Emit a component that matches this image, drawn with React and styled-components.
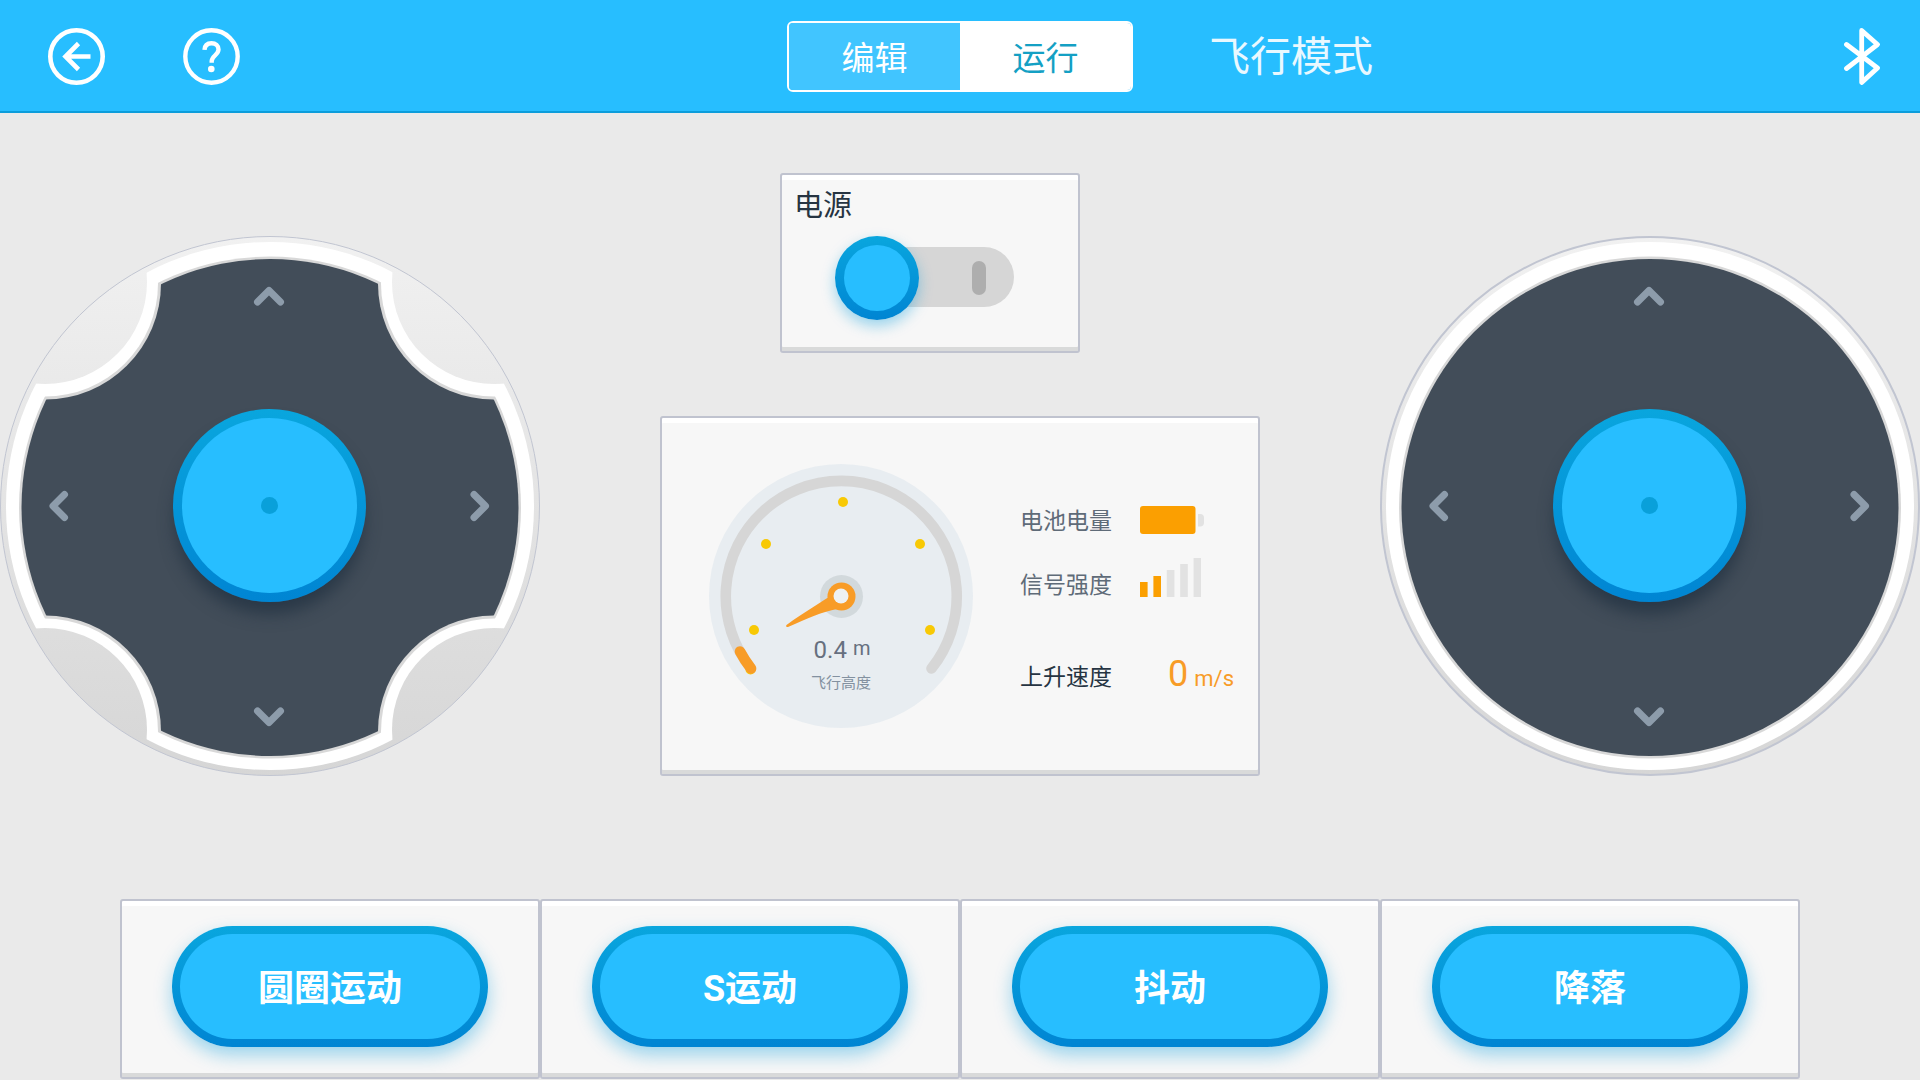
import { useState } from 'react'
import styled, { createGlobalStyle } from 'styled-components'

const colours = {
    sky: '#27beff',
    skyDark: '#0c9ddb',
    page: '#eaeaea',
    card: '#f7f7f7',
    line: '#c0c3cf',
    slate: '#424d59',
    chevron: '#8d9cab',
    ink: '#263442',
    muted: '#5f6b78',
    orange: '#f89c27',
    amber: '#fb9f01',
    off: '#e2e2e2',
}

const ring = 'linear-gradient(#09a6de, #0085d3)'
const glossy = `linear-gradient(${colours.sky}, ${colours.sky}) padding-box, ${ring} border-box`

const GlobalStyle = createGlobalStyle`
    * {
        box-sizing: border-box;
    }
    body {
        margin: 0;
        background: ${colours.page};
        color: ${colours.ink};
        font-family: Roboto, "Noto Sans CJK SC", sans-serif;
    }
    button {
        font-family: inherit;
        cursor: pointer;
    }
`

const Header = styled.header`
    display: grid;
    grid-template-columns: 1fr auto 1fr;
    align-items: center;
    height: 113px;
    padding: 2px 40px 0;
    background: ${colours.sky};
    border-bottom: 2px solid ${colours.skyDark};
`

const Actions = styled.div`
    display: flex;
    gap: 78px;
    padding-left: 8px;
`

const IconButton = styled.button`
    display: flex;
    padding: 0;
    border: 0;
    background: none;
    color: #fff;
`

const Segments = styled.div`
    display: flex;
    height: 71px;
    border: 2px solid #fff;
    border-radius: 6px;
    overflow: hidden;
`

const Segment = styled.button`
    width: 171px;
    padding: 4px 0 0;
    border: 0;
    font-size: 33px;
    line-height: 48px;
    background: ${props => props.$active ? '#fff' : '#41c5ff'};
    color: ${props => props.$active ? '#14a0c4' : '#fff'};
`

const TitleBar = styled.div`
    display: flex;
    align-items: center;
    justify-content: space-between;
    padding-left: 76px;
`

const Title = styled.h1`
    margin: 0;
    font-size: 41px;
    font-weight: 400;
    line-height: 60px;
    color: #e9f8ff;
`

const Stage = styled.main`
    display: grid;
    grid-template-columns: auto auto auto;
    justify-content: space-between;
    align-items: end;
    padding-top: 60px;
`

const Column = styled.div`
    display: flex;
    flex-direction: column;
    gap: 63px;
    width: 600px;
`

const Card = styled.section`
    height: 180px;
    border: 2px solid ${colours.line};
    border-radius: 3px;
    background: ${colours.card};
    box-shadow: inset 0 5px #fff, inset 0 -4px #d9dada;
`

const PowerCard = styled(Card)`
    display: flex;
    flex-direction: column;
    width: 300px;
    margin-left: 120px;
    padding: 8px 12px;
`

const CardTitle = styled.h2`
    margin: 0;
    font-size: 29px;
    font-weight: 400;
    line-height: 46px;
`

const Switch = styled.label`
    position: relative;
    align-self: center;
    width: 168px;
    height: 60px;
    margin-top: 18px;
    border-radius: 30px;
    background: #d6d6d6;
    cursor: pointer;
`

const SwitchInput = styled.input`
    position: absolute;
    inset: 0;
    margin: 0;
    opacity: 0;
`

const SwitchMark = styled.span`
    position: absolute;
    top: 14px;
    right: 28px;
    width: 14px;
    height: 34px;
    border-radius: 7px;
    background: #aeaeae;
`

const SwitchThumb = styled.span`
    position: absolute;
    top: -11px;
    left: ${props => props.$on ? '95px' : '-11px'};
    width: 84px;
    height: 84px;
    border: 9px solid transparent;
    border-radius: 50%;
    background: ${glossy};
    box-shadow: 0 6px 14px rgba(12, 157, 219, 0.4);
`

const StatusCard = styled(Card)`
    display: flex;
    align-items: center;
    gap: 47px;
    height: 360px;
    padding: 0 24px 0 47px;
`

const Gauge = styled.div`
    display: grid;
    width: 264px;
    height: 264px;
    > * {
        grid-area: 1 / 1;
    }
`

const Reading = styled.div`
    padding-top: 170px;
    text-align: center;
`

const Height = styled.div`
    display: flex;
    justify-content: center;
    align-items: flex-start;
    gap: 6px;
    padding-left: 2px;
    font-size: 24px;
    line-height: 32px;
    color: #66707f;
`

const HeightUnit = styled.span`
    font-size: 20px;
    line-height: 28px;
`

const Caption = styled.div`
    font-size: 15px;
    line-height: 34px;
    color: #8391a0;
`

const Stats = styled.dl`
    flex: 1;
    margin: 0;
    padding-top: 4px;
`

const Stat = styled.div`
    display: flex;
    align-items: center;
    height: 64px;
    margin-top: ${props => props.$apart ? '28px' : '0'};
    color: ${props => props.$apart ? colours.ink : colours.muted};
`

const StatName = styled.dt`
    padding-top: 4px;
    font-size: 23px;
    line-height: 32px;
`

const StatValue = styled.dd`
    display: flex;
    margin: 0 0 0 28px;
`

const Speed = styled.dd`
    display: flex;
    align-items: baseline;
    gap: 6px;
    margin: 0 0 0 auto;
    font-size: 36px;
    line-height: 40px;
    color: ${colours.orange};
`

const SpeedUnit = styled.span`
    font-size: 22px;
`

const Pad = styled.div`
    display: grid;
    place-items: center;
    width: 540px;
    height: 540px;
    > * {
        grid-area: 1 / 1;
    }
`

const Knob = styled.button`
    display: grid;
    place-items: center;
    width: 193px;
    height: 193px;
    margin: 0 1px 1px 0;
    padding: 0;
    border: 9px solid transparent;
    border-radius: 50%;
    background: ${glossy};
    box-shadow: 0 14px 16px -2px rgba(34, 50, 66, 0.75);
`

const KnobDot = styled.span`
    width: 17px;
    height: 17px;
    border-radius: 50%;
    background: #09a0da;
`

const Dock = styled.footer`
    display: grid;
    grid-template-columns: repeat(4, 1fr);
    margin: 123px 120px 1px;
`

const DockCard = styled(Card)`
    display: flex;
    justify-content: center;
    align-items: flex-start;
    padding-top: 25px;
`

const MoveButton = styled.button`
    width: 316px;
    height: 121px;
    padding: 4px 0 0;
    border: 8px solid transparent;
    border-radius: 61px;
    background: ${glossy};
    box-shadow: 0 8px 18px rgba(12, 157, 219, 0.4);
    color: #fff;
    font-size: 36px;
    font-weight: 700;
    line-height: 52px;
`

const chevrons = [
    'M257.500 66L269 54.500L280.500 66',
    'M257.500 475L269 486.500L280.500 475',
    'M64.500 258.500L53 270L64.500 281.500',
    'M474 258.500L485.500 270L474 281.500',
]

const corners = [[45, 46], [494, 46], [45, 494], [494, 494]]

function BackIcon () {
    return (
        <svg width="57" height="57" viewBox="0 0 57 57" fill="none" stroke="currentColor">
            <circle cx="28.5" cy="28.5" r="26.200" strokeWidth="4.600" />
            <path d="M42.500 28.500H17M30.500 15.500L17.500 28.500L30.500 41.500" strokeWidth="4.600" />
        </svg>
    )
}

function HelpIcon () {
    return (
        <svg width="57" height="57" viewBox="0 0 57 57" fill="none" stroke="currentColor">
            <circle cx="28.5" cy="28.5" r="26.200" strokeWidth="4.400" />
            <path d="M21.500 21.800C21.800 17.500 24.500 15.200 28.500 15.200C32.600 15.200 35.500 17.700 35.500 21.500C35.500 26.700 28.700 28.200 28.700 33V34.800" strokeWidth="4.400" />
            <circle cx="28.300" cy="41" r="3.300" fill="currentColor" stroke="none" />
        </svg>
    )
}

function BluetoothIcon () {
    return (
        <svg width="36" height="57" viewBox="0 0 36 57" fill="none" stroke="currentColor" strokeWidth="4.800" strokeLinecap="round" strokeLinejoin="round">
            <path d="M2.500 16.500L33.500 40L17.700 54.500V2.500L33.500 16.500L2.500 40.500" />
        </svg>
    )
}

function Joystick ({ name, notched }) {
    const cut = (id, r, drop = 0) => (
        <mask id={`${name}-${id}`}>
            <rect width="540" height="540" fill="#fff" />
            {notched && corners.map(([x, y]) => <circle key={`${x}-${y}`} cx={x} cy={y + drop} r={r} fill="#000" />)}
        </mask>
    )
    return (
        <Pad>
            <svg width="540" height="540" viewBox="0 0 540 540">
                <defs>
                    <linearGradient id={`${name}-base`} x2="0" y2="1">
                        <stop offset="0" stopColor="#f1f1f1" />
                        <stop offset="1" stopColor="#d6d6d6" />
                    </linearGradient>
                    {cut('outer', 102)}
                    {cut('lip', 113, 1.5)}
                    {cut('well', 116, 1.5)}
                </defs>
                <circle
                    cx="270" cy="270" r={notched ? 269.5 : 269}
                    fill={`url(#${name}-base)`}
                    stroke="#c1c5d1"
                    strokeWidth={notched ? 1 : 2}
                />
                <circle cx="270" cy="270" r="264" fill="#fff" mask={`url(#${name}-outer)`} />
                <circle cx="270" cy="271.500" r="251" fill="#d8d8d8" mask={`url(#${name}-lip)`} />
                <circle cx="270" cy="271.500" r="248.500" fill={colours.slate} mask={`url(#${name}-well)`} />
                {chevrons.map(d => (
                    <path key={d} d={d} fill="none" stroke={colours.chevron} strokeWidth="7" strokeLinecap="round" strokeLinejoin="round" />
                ))}
            </svg>
            <Knob aria-label={name}>
                <KnobDot />
            </Knob>
        </Pad>
    )
}

const ticks = [[134, 38], [57, 80], [211, 80], [45, 166], [221, 166]]

function Altimeter () {
    return (
        <Gauge>
            <svg width="264" height="264" viewBox="0 0 264 264" fill="none">
                <circle cx="132" cy="132" r="132" fill="#e8edf1" />
                <path d="M42 204.500A115.500 115.500 0 1 1 222.500 204.500" stroke="#d6d6d6" strokeWidth="10.600" strokeLinecap="round" />
                <circle cx="41.500" cy="205.500" r="5" fill="#f8c905" />
                <path d="M42 204.500A115.500 115.500 0 0 1 31 187.500" stroke={colours.orange} strokeWidth="10.600" strokeLinecap="round" />
                {ticks.map(([x, y]) => <circle key={`${x}-${y}`} cx={x} cy={y} r="5" fill="#f8c905" />)}
                <circle cx="132.500" cy="132.500" r="21.500" fill="#d2d9dc" />
                <path d="M124 130C114 137.500 96 147.500 77.500 161C76.500 162 77.500 163.500 79 163C98 154.500 114 147.500 128 145Z" fill={colours.orange} />
                <circle cx="132.500" cy="132.500" r="14" fill={colours.orange} />
                <circle cx="132" cy="132" r="7.500" fill="#eef1f3" />
            </svg>
            <Reading>
                <Height>0.4<HeightUnit>m</HeightUnit></Height>
                <Caption>飞行高度</Caption>
            </Reading>
        </Gauge>
    )
}

function Battery () {
    return (
        <svg width="65" height="28" viewBox="0 0 65 28">
            <rect width="55.500" height="28" rx="3" fill={colours.amber} />
            <path d="M58 8H60A4 4 0 0 1 64 12V16.500A4 4 0 0 1 60 20.500H58Z" fill={colours.off} />
        </svg>
    )
}

function Signal ({ level }) {
    return (
        <svg width="61" height="52" viewBox="0 0 61 52">
            {[0, 1, 2, 3, 4].map(i => (
                <rect
                    key={i}
                    x={i * 13.4} y={24 - i * 6}
                    width="7.600" height={15 + i * 6}
                    fill={i < level ? colours.amber : colours.off}
                />
            ))}
        </svg>
    )
}

const modes = ['编辑', '运行']
const moves = ['圆圈运动', 'S运动', '抖动', '降落']

export default function App () {
    const [mode, setMode] = useState('运行')
    const [power, setPower] = useState(false)

    return (
        <>
            <GlobalStyle />
            <Header>
                <Actions>
                    <IconButton aria-label="返回"><BackIcon /></IconButton>
                    <IconButton aria-label="帮助"><HelpIcon /></IconButton>
                </Actions>
                <Segments>
                    {modes.map(item => (
                        <Segment key={item} $active={item === mode} onClick={() => setMode(item)}>{item}</Segment>
                    ))}
                </Segments>
                <TitleBar>
                    <Title>飞行模式</Title>
                    <IconButton aria-label="蓝牙"><BluetoothIcon /></IconButton>
                </TitleBar>
            </Header>
            <Stage>
                <Joystick name="move" notched />
                <Column>
                    <PowerCard>
                        <CardTitle id="power">电源</CardTitle>
                        <Switch>
                            <SwitchInput
                                type="checkbox"
                                aria-labelledby="power"
                                checked={power}
                                onChange={e => setPower(e.target.checked)}
                            />
                            <SwitchMark />
                            <SwitchThumb $on={power} />
                        </Switch>
                    </PowerCard>
                    <StatusCard>
                        <Altimeter />
                        <Stats>
                            <Stat>
                                <StatName>电池电量</StatName>
                                <StatValue><Battery /></StatValue>
                            </Stat>
                            <Stat>
                                <StatName>信号强度</StatName>
                                <StatValue><Signal level={2} /></StatValue>
                            </Stat>
                            <Stat $apart>
                                <StatName>上升速度</StatName>
                                <Speed>0<SpeedUnit>m/s</SpeedUnit></Speed>
                            </Stat>
                        </Stats>
                    </StatusCard>
                </Column>
                <Joystick name="turn" />
            </Stage>
            <Dock>
                {moves.map(move => (
                    <DockCard key={move}>
                        <MoveButton>{move}</MoveButton>
                    </DockCard>
                ))}
            </Dock>
        </>
    )
}
